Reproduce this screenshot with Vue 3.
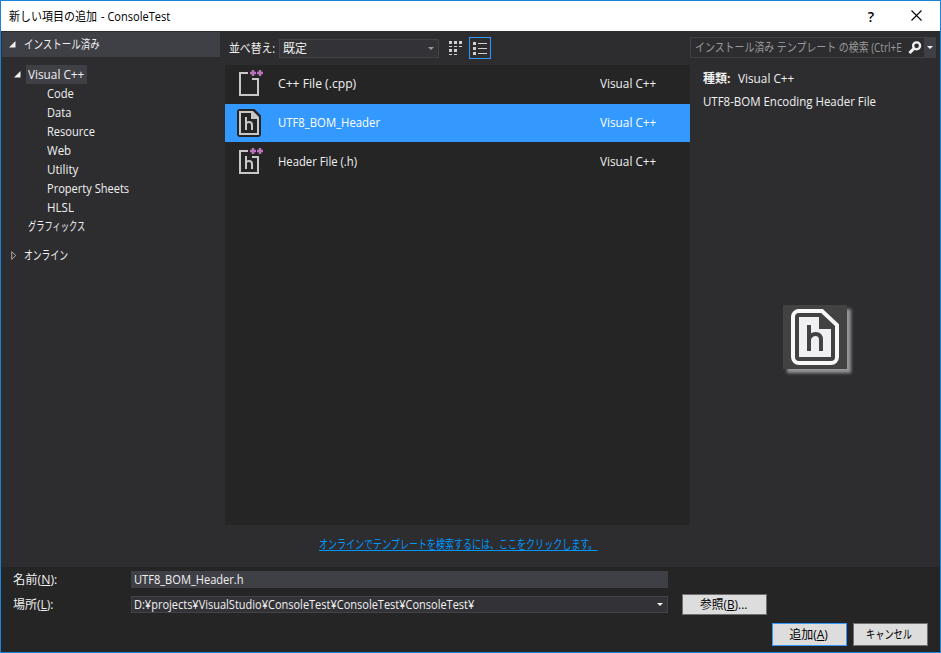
<script setup>
import { ref } from 'vue'

const treeItems = [
  { name: 'Code', width: 27 },
  { name: 'Data', width: 24 },
  { name: 'Resource', width: 48 },
  { name: 'Web', width: 24 },
  { name: 'Utility', width: 31 },
  { name: 'Property Sheets', width: 82 },
  { name: 'HLSL', width: 27 }
]

const templates = [
  { id: 'cpp', name: 'C++ File (.cpp)', width: 78 },
  { id: 'bom', name: 'UTF8_BOM_Header', width: 102 },
  { id: 'header', name: 'Header File (.h)', width: 79 }
]

const selected = ref('bom')
const view = ref('list')

const vFit = {
  mounted(el, { value }) {
    const natural = el.offsetWidth
    if (!natural) return
    el.style.transform = `scaleX(${value / natural})`
    el.style.marginRight = `${value - natural}px`
  }
}
</script>

<template>
  <div class="dialog">
    <header class="titlebar">
      <h1><span v-fit="88" class="fit">新しい項目の追加</span><span v-fit="69" class="fit">- ConsoleTest</span></h1>
      <button class="help" aria-label="ヘルプ">?</button>
      <button class="close" aria-label="閉じる">
        <svg width="11" height="11" viewBox="0 0 11 11"><path d="M.5.5l10 10M10.5.5l-10 10" stroke="#000" stroke-width="1.1" /></svg>
      </button>
    </header>

    <main class="content">
      <nav class="sidebar">
        <div class="group">
          <svg class="arrow" width="7" height="7"><path d="M6.5 0v6.5H0z" fill="#f1f1f1" /></svg>
          <span v-fit="76" class="fit">インストール済み</span>
        </div>
        <div class="tree">
          <div class="node root">
            <svg class="arrow" width="7" height="7"><path d="M6.5 0v6.5H0z" fill="#f1f1f1" /></svg>
            <span class="node-name"><span v-fit="56" class="fit">Visual C++</span></span>
          </div>
          <div v-for="item in treeItems" :key="item.name" class="node child">
            <span v-fit="item.width" class="fit">{{ item.name }}</span>
          </div>
          <div class="node graphics"><span v-fit="57" class="fit">グラフィックス</span></div>
        </div>
        <div class="node online">
          <svg class="arrow" width="6" height="9"><path d="M.7.7v7.6L4.8 4.5z" fill="none" stroke="#aaa" /></svg>
          <span v-fit="44" class="fit">オンライン</span>
        </div>
      </nav>

      <section class="middle">
        <div class="toolbar">
          <span class="sort-label"><span v-fit="46" class="fit">並べ替え:</span></span>
          <div class="combo sort">
            <span v-fit="24" class="fit">既定</span>
            <svg width="6" height="3"><path d="M0 0h6L3 3z" fill="#999" /></svg>
          </div>
          <button class="view-btn" @click="view = 'icons'" :class="{ active: view === 'icons' }" aria-label="アイコン">
            <svg width="13" height="14" shape-rendering="crispEdges" fill="#d0d0d0">
              <path d="M0 0h3v3H0zM5 0h3v3H5zM10 0h3v3h-3zM0 8h3v3H0zM5 8h3v3H5z" />
              <path d="M0 5h3v1H0zM5 5h3v1H5zM10 5h3v1h-3zM0 13h3v1H0zM5 13h3v1H5z" />
            </svg>
          </button>
          <button class="view-btn" @click="view = 'list'" :class="{ active: view === 'list' }" aria-label="一覧">
            <svg width="14" height="13" shape-rendering="crispEdges" fill="#d0d0d0">
              <path d="M0 0h3v3H0zM0 5h3v3H0zM0 10h3v3H0zM5 1h9v1H5zM5 6h9v1H5zM5 11h9v1H5z" />
            </svg>
          </button>
        </div>

        <ul class="templates">
          <li v-for="tpl in templates" :key="tpl.id" :class="{ selected: selected === tpl.id }" @click="selected = tpl.id">
            <svg class="file-icon" width="28" height="30" viewBox="0 0 28 30">
              <template v-if="tpl.id === 'bom'">
                <path d="M3 1h14.5L24 7.5V26a3 3 0 0 1-3 3H3a3 3 0 0 1-3-3V4a3 3 0 0 1 3-3z" fill="#252526" />
                <path d="M3 4h12.5L21 9.5V26H3z" fill="none" stroke="#c8c8c8" stroke-width="2" />
                <path d="M14 4h2l5 5v2h-7z" fill="#c8c8c8" />
                <path d="M9 9v13M9 15.5q1-1.500 3-1.500 3 0 3 3v5" fill="none" stroke="#c8c8c8" stroke-width="2" />
              </template>
              <template v-else>
                <path d="M11 4H3v22h18V10h-6" fill="none" stroke="#c8c8c8" stroke-width="2" />
                <path d="M13 4h6M16 1v6M20 4h6M23 1v6" stroke="#b973b9" stroke-width="2.5" />
                <path v-if="tpl.id === 'header'" d="M9 9v13M9 15.500q1-1.500 3-1.500 3 0 3 3v5" fill="none" stroke="#c8c8c8" stroke-width="2" />
              </template>
            </svg>
            <span class="tpl-name"><span v-fit="tpl.width" class="fit">{{ tpl.name }}</span></span>
            <span class="tpl-lang"><span v-fit="56" class="fit">Visual C++</span></span>
          </li>
        </ul>

        <div class="online-search">
          <a href="#" @click.prevent><span v-fit="278" class="fit">オンラインでテンプレートを検索するには、ここをクリックします。</span></a>
        </div>
      </section>

      <aside class="details">
        <div class="search">
          <span class="placeholder"><span v-fit="207" class="fit">インストール済み テンプレート の検索 (Ctrl+E</span></span>
          <svg class="magnifier" width="14" height="13" viewBox="0 0 14 13">
            <circle cx="8.6" cy="4.8" r="3.5" fill="none" stroke="#f1f1f1" stroke-width="2.3" />
            <path d="M6 7.5L1.4 12" stroke="#f1f1f1" stroke-width="3" />
          </svg>
          <span class="search-drop"><svg width="6" height="3"><path d="M0 0h6L3 3z" fill="#f1f1f1" /></svg></span>
        </div>
        <p class="type"><b><span v-fit="27" class="fit">種類:</span></b><span v-fit="56" class="fit">Visual C++</span></p>
        <p class="desc"><span v-fit="173" class="fit">UTF8-BOM Encoding Header File</span></p>
        <div class="preview">
          <svg width="64" height="64" viewBox="0 0 64 64">
            <path d="M14 6h25l15 14v32a6 6 0 0 1-6 6H16a6 6 0 0 1-6-6V12a6 6 0 0 1 6-6z" fill="none" stroke="#f8f8f8" stroke-width="4" />
            <path d="M16 12h20v12h12v28H16z" fill="#f0eff1" />
            <path d="M26 20v26M26 34q2-5 6.500-5 5.500 0 5.500 6v11" fill="none" stroke="#424242" stroke-width="4" />
          </svg>
        </div>
      </aside>
    </main>

    <footer class="bottom">
      <div class="field">
        <label><span v-fit="44" class="fit">名前(<u>N</u>):</span></label>
        <div class="input"><span v-fit="110" class="fit">UTF8_BOM_Header.h</span></div>
      </div>
      <div class="field location">
        <label><span v-fit="41" class="fit">場所(<u>L</u>):</span></label>
        <div class="combo path">
          <span v-fit="340" class="fit">D:¥projects¥VisualStudio¥ConsoleTest¥ConsoleTest¥ConsoleTest¥</span>
          <svg width="6" height="3"><path d="M0 0h6L3 3z" fill="#f1f1f1" /></svg>
        </div>
        <button class="btn browse"><span v-fit="47" class="fit">参照(<u>B</u>)...</span></button>
      </div>
      <div class="actions">
        <button class="btn primary"><span v-fit="39" class="fit">追加(<u>A</u>)</span></button>
        <button class="btn"><span v-fit="46" class="fit">キャンセル</span></button>
      </div>
    </footer>
  </div>
</template>

<style>
body {
  margin: 0;
  overflow: hidden;
}
</style>

<style scoped>
* {
  box-sizing: border-box;
}
.dialog {
  display: flex;
  flex-direction: column;
  width: 941px;
  height: 653px;
  border: 1px solid #1883d7;
  background: #2d2d30;
  color: #f1f1f1;
  font: 12px/19px "Open Sans", "Noto Sans CJK JP", sans-serif;
  white-space: nowrap;
}
.fit {
  display: inline-block;
  flex: none;
  transform-origin: 0 50%;
}
button {
  padding: 0;
  border: none;
  background: none;
  color: inherit;
  font: inherit;
}
svg {
  display: block;
  flex: none;
}
.titlebar {
  display: flex;
  align-items: center;
  height: 30px;
  padding-left: 8px;
  background: #fff;
  color: #000;
}
.titlebar h1 {
  display: flex;
  gap: 4px;
  flex: 1;
  margin: 0;
  font-size: 12px;
  font-weight: normal;
}
.help {
  width: 20px;
  margin-right: 30px;
  font-size: 14px;
  font-weight: 600;
}
.close {
  margin-right: 18px;
  padding-bottom: 2px;
}
.content {
  display: flex;
  height: 536px;
}
.sidebar {
  width: 224px;
  padding: 1px 5px 0 1px;
}
.group {
  display: flex;
  align-items: center;
  gap: 8px;
  height: 25px;
  padding-left: 7px;
  background: #3f3f46;
}
.tree {
  padding-top: 8px;
}
.node {
  display: flex;
  align-items: center;
  height: 19px;
}
.root {
  gap: 5px;
  padding-left: 12px;
}
.node-name {
  display: flex;
  width: 61px;
  padding-left: 2px;
  background: #3f3f46;
}
.child {
  padding-left: 45px;
}
.graphics {
  padding-left: 26px;
}
.online {
  gap: 7px;
  margin-top: 10px;
  padding-left: 9px;
}
.middle {
  width: 465px;
}
.toolbar {
  display: flex;
  align-items: center;
  height: 34px;
}
.sort-label {
  display: flex;
  width: 54px;
  padding-left: 4px;
}
.combo {
  display: flex;
  align-items: center;
  justify-content: space-between;
  border: 1px solid #434346;
  background: #333337;
}
.sort {
  width: 160px;
  height: 19px;
  margin-top: 1px;
  padding: 0 4px 0 3px;
}
.view-btn {
  display: flex;
  align-items: center;
  justify-content: center;
  width: 22px;
  height: 22px;
  border: 1px solid transparent;
}
.view-btn:first-of-type {
  margin: 0 3px 0 5px;
  padding-left: 1px;
}
.view-btn.active {
  border-color: #3399ff;
}
.templates {
  height: 460px;
  margin: 0;
  padding: 0;
  background: #252526;
  list-style: none;
}
.templates li {
  display: flex;
  align-items: flex-start;
  height: 38px;
  margin-bottom: 1px;
  padding-left: 12px;
}
.templates li.selected {
  background: #3399ff;
  color: #fff;
}
.file-icon {
  margin-top: 4px;
}
.tpl-name,
.tpl-lang {
  display: flex;
  padding-top: 9px;
}
.tpl-name {
  width: 322px;
  margin-left: 13px;
}
.online-search {
  display: flex;
  justify-content: center;
  padding: 10px 0 0 2px;
}
.online-search a {
  display: flex;
  color: #0097fb;
}
.online-search .fit {
  text-decoration: underline;
}
.details {
  flex: 1;
  padding: 6px 4px 0 0;
}
.search {
  display: flex;
  align-items: center;
  height: 21px;
  border: 1px solid #3f3f46;
  background: #2d2d30;
}
.placeholder {
  display: flex;
  width: 217px;
  padding-left: 4px;
  color: #999;
}
.search-drop {
  display: flex;
  align-items: center;
  justify-content: center;
  flex: 1;
  height: 19px;
  margin-left: 2px;
  background: #3f3f46;
}
.type {
  display: flex;
  gap: 8px;
  margin: 11px 0 0 13px;
}
.type b {
  display: flex;
}
.desc {
  margin: 4px 0 0 13px;
}
.preview {
  width: 64px;
  height: 64px;
  margin: 194px 0 0 93px;
  background: #424242;
  box-shadow: 4px 4px 3px #969698;
}
.bottom {
  flex: 1;
  padding: 4px 12px 0;
  background: #252526;
}
.field {
  display: flex;
  align-items: center;
  height: 17px;
}
.field label {
  display: flex;
  width: 118px;
}
.input {
  display: flex;
  align-items: center;
  width: 537px;
  height: 17px;
  padding-left: 3px;
  background: #3f3f46;
}
.location {
  height: 21px;
  margin-top: 6px;
}
.path {
  width: 537px;
  height: 17px;
  padding: 0 4px 0 2px;
}
.btn {
  display: flex;
  align-items: center;
  justify-content: center;
  width: 75px;
  height: 23px;
  padding-right: 2px;
  border: 1px solid #707070;
  background: #dddddd;
  color: #000;
}
.browse {
  width: 85px;
  height: 21px;
  margin-left: 14px;
}
.primary {
  border-color: #3399ff;
}
.actions {
  display: flex;
  justify-content: flex-end;
  gap: 6px;
  margin-top: 8px;
}
</style>
